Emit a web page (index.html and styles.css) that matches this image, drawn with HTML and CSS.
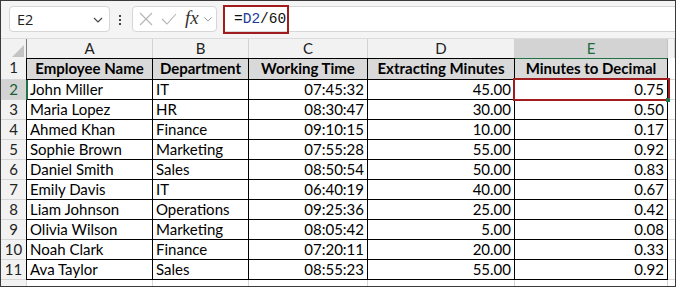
FILE: index.html
```html
<!DOCTYPE html>
<html lang="en">
<head>
    <meta charset="UTF-8">
    <meta name="viewport" content="width=device-width, initial-scale=1.0">
    <title>Minutes to Decimal</title>
    <link rel="stylesheet" href="styles.css">
</head>
<body>
<div class="frame">
    <div class="formula-bar">
        <div class="name-box">
            <span>E2</span>
            <svg class="chev" width="10" height="6" viewBox="0 0 10 6"><path d="M1 1 L5 5 L9 1" fill="none" stroke="#444" stroke-width="1.1"/></svg>
        </div>
        <div class="more">
            <i></i><i></i><i></i>
        </div>
        <div class="fx-group">
            <svg width="14" height="14" viewBox="0 0 14 14"><path d="M1 1 L13 13 M13 1 L1 13" stroke="#b4b4b4" stroke-width="1.1"/></svg>
            <svg class="check" width="16" height="12" viewBox="0 0 16 12"><path d="M1 6 L6 11 L15 1" fill="none" stroke="#b4b4b4" stroke-width="1.1"/></svg>
            <span class="fx">fx</span>
            <svg width="8" height="5" viewBox="0 0 8 5"><path d="M0.5 0.5 L4 4 L7.5 0.5" fill="none" stroke="#999" stroke-width="1"/></svg>
        </div>
        <div class="formula-input">
            <span class="formula">=<span class="ref">D2</span>/60</span>
        </div>
    </div>

    <div class="sheet">
        <!-- column letters -->
        <div class="corner"><span class="tri"></span></div>
        <div class="col-head first">A</div>
        <div class="col-head">B</div>
        <div class="col-head">C</div>
        <div class="col-head">D</div>
        <div class="col-head active">E</div>
        <div class="col-head"></div>

        <!-- row 1 -->
        <div class="row-head">1</div>
        <div class="cell hdr a">Employee Name</div>
        <div class="cell hdr">Department</div>
        <div class="cell hdr">Working Time</div>
        <div class="cell hdr">Extracting Minutes</div>
        <div class="cell hdr e">Minutes to Decimal</div>
        <div class="blank"></div>

        <div class="row-head active">2</div>
        <div class="cell a sel-row">John Miller</div>
        <div class="cell">IT</div>
        <div class="cell num">07:45:32</div>
        <div class="cell num">45.00</div>
        <div class="cell num sel">0.75</div>
        <div class="blank"></div>

        <div class="row-head">3</div>
        <div class="cell a">Maria Lopez</div>
        <div class="cell">HR</div>
        <div class="cell num">08:30:47</div>
        <div class="cell num">30.00</div>
        <div class="cell num">0.50</div>
        <div class="blank"></div>

        <div class="row-head">4</div>
        <div class="cell a">Ahmed Khan</div>
        <div class="cell">Finance</div>
        <div class="cell num">09:10:15</div>
        <div class="cell num">10.00</div>
        <div class="cell num">0.17</div>
        <div class="blank"></div>

        <div class="row-head">5</div>
        <div class="cell a">Sophie Brown</div>
        <div class="cell">Marketing</div>
        <div class="cell num">07:55:28</div>
        <div class="cell num">55.00</div>
        <div class="cell num">0.92</div>
        <div class="blank"></div>

        <div class="row-head">6</div>
        <div class="cell a">Daniel Smith</div>
        <div class="cell">Sales</div>
        <div class="cell num">08:50:54</div>
        <div class="cell num">50.00</div>
        <div class="cell num">0.83</div>
        <div class="blank"></div>

        <div class="row-head">7</div>
        <div class="cell a">Emily Davis</div>
        <div class="cell">IT</div>
        <div class="cell num">06:40:19</div>
        <div class="cell num">40.00</div>
        <div class="cell num">0.67</div>
        <div class="blank"></div>

        <div class="row-head">8</div>
        <div class="cell a">Liam Johnson</div>
        <div class="cell">Operations</div>
        <div class="cell num">09:25:36</div>
        <div class="cell num">25.00</div>
        <div class="cell num">0.42</div>
        <div class="blank"></div>

        <div class="row-head">9</div>
        <div class="cell a">Olivia Wilson</div>
        <div class="cell">Marketing</div>
        <div class="cell num">08:05:42</div>
        <div class="cell num">5.00</div>
        <div class="cell num">0.08</div>
        <div class="blank"></div>

        <div class="row-head">10</div>
        <div class="cell a">Noah Clark</div>
        <div class="cell">Finance</div>
        <div class="cell num">07:20:11</div>
        <div class="cell num">20.00</div>
        <div class="cell num">0.33</div>
        <div class="blank"></div>

        <div class="row-head">11</div>
        <div class="cell a">Ava Taylor</div>
        <div class="cell">Sales</div>
        <div class="cell num">08:55:23</div>
        <div class="cell num">55.00</div>
        <div class="cell num">0.92</div>
        <div class="blank"></div>

        <!-- row 12, cut off -->
        <div class="row-head last"></div>
        <div class="empty a"></div>
        <div class="empty"></div>
        <div class="empty"></div>
        <div class="empty"></div>
        <div class="empty"></div>
        <div class="empty end"></div>
    </div>
</div>
</body>
</html>
```

FILE: styles.css
```css
* {
    box-sizing: border-box;
}
body {
    margin: 0;
    background: #fff;
}
.frame {
    width: 676px;
    height: 287px;
    border: 1px solid #3a3a3a;
    display: flex;
    flex-direction: column;
    font-family: Lato, "Liberation Sans", sans-serif;
    color: #000;
    overflow: hidden;
}

/* formula bar */
.formula-bar {
    height: 38px;
    flex: none;
    display: flex;
    align-items: flex-start;
    padding-top: 5px;
    background: #f4f4f4;
    border-bottom: 1px solid #dcdcdc;
}
.name-box {
    width: 101px;
    height: 26px;
    margin-left: 8px;
    background: #fff;
    border: 1px solid #d6d6d6;
    border-radius: 4px;
    display: flex;
    align-items: center;
    justify-content: space-between;
    padding: 0 6px 0 7px;
    font-family: "Open Sans", sans-serif;
    font-size: 14.5px;
    color: #222;
}
.name-box .chev {
    margin-top: 2px;
}
.more {
    width: 3px;
    margin-left: 9px;
    margin-top: 9px;
    display: flex;
    flex-direction: column;
    gap: 2px;
}
.more i {
    width: 2px;
    height: 2px;
    background: #444;
}
.fx-group {
    width: 85px;
    height: 26px;
    margin-left: 10px;
    background: #fff;
    border: 1px solid #d6d6d6;
    border-radius: 4px;
    display: flex;
    align-items: center;
    padding-left: 6px;
    gap: 9px;
}
.fx-group .check {
    margin-left: -1px;
}
.fx {
    font-family: "Liberation Serif", serif;
    font-style: italic;
    font-size: 19px;
    color: #333;
    margin-left: -1px;
    margin-right: -4px;
    margin-top: -3px;
}
.formula-input {
    flex: 1;
    height: 26px;
    margin-left: 6px;
    background: #fff;
    border-top: 1px solid #d6d6d6;
    border-bottom: 1px solid #d6d6d6;
}
.formula {
    display: inline-block;
    width: 66px;
    height: 29px;
    margin-top: -2px;
    border: 2px solid #a11d1d;
    padding-left: 9px;
    font-family: "Liberation Mono", monospace;
    font-size: 14.5px;
    line-height: 25px;
    color: #111;
}
.ref {
    color: #1d3c99;
}

/* grid */
.sheet {
    flex: 1;
    display: grid;
    grid-template-columns: 25px 127px 96px 119px 147px 153px 1fr;
    grid-template-rows: 19px 22px repeat(10, 20px) 1fr;
    font-size: 15px;
}
.corner {
    background: #f2f2f2;
    position: relative;
}
.tri {
    position: absolute;
    right: 2px;
    bottom: 1px;
    width: 0;
    height: 0;
    border-left: 12px solid transparent;
    border-bottom: 12px solid #c4c4c4;
}
.col-head {
    background: #f2f2f2;
    border-right: 1px solid #d2d2d2;
    text-align: center;
    line-height: 19px;
    color: #222;
}
.col-head.first {
    border-left: 1px solid #7a7a7a;
}
.col-head.active {
    background: #d3d3d3;
    color: #1c6b3c;
    border-right-color: #c2c2c2;
}
.row-head {
    background: #f2f2f2;
    border-bottom: 1px solid #d6d6d6;
    text-align: center;
    line-height: 19px;
    color: #222;
}
.row-head.active {
    background: #d3d3d3;
    color: #1c5e38;
}
.row-head.last {
    border-bottom: none;
}
.cell {
    border-right: 1px solid #000;
    border-bottom: 1px solid #000;
    padding: 0 3px;
    line-height: 19px;
    white-space: nowrap;
    overflow: hidden;
}
.cell.a {
    border-left: 1px solid #000;
}
.cell.sel-row {
    border-left-color: #217346;
    border-left-width: 2px;
    padding-left: 2px;
}
.cell.hdr {
    background: #d9d9d9;
    border-top: 1px solid #000;
    font-weight: bold;
    text-align: center;
    padding: 0;
}
.cell.hdr.e {
    border-top-color: #217346;
}
.num {
    text-align: right;
}
.cell.sel {
    position: relative;
    overflow: visible;
}
.cell.sel::after {
    content: "";
    position: absolute;
    left: -2px;
    top: -2px;
    right: -3px;
    bottom: -2px;
    border: 2px solid #a11d1d;
}
.cell.sel::before {
    content: "";
    position: absolute;
    right: -3px;
    bottom: -3px;
    width: 4px;
    height: 4px;
    background: #217346;
    z-index: 1;
}
.blank {
    border-bottom: 1px solid #d6d6d6;
}
.empty {
    border-right: 1px solid #d6d6d6;
}
.empty.a {
    border-left: 1px solid #d6d6d6;
}
.empty.end {
    border-right: none;
}
```
